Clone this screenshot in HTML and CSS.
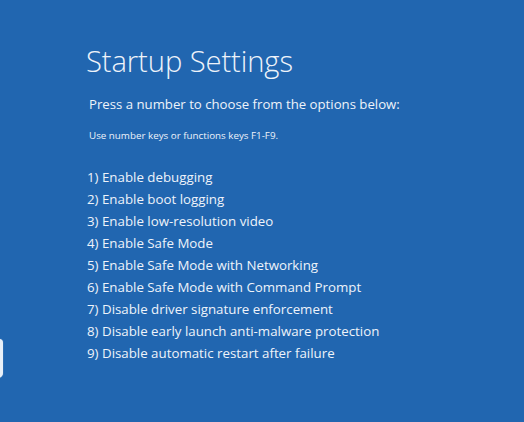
FILE: index.html
```html
<!DOCTYPE html>
<html>
<head>
<meta charset="utf-8">
<link rel="stylesheet" href="styles.css">
</head>
<body>
<div class="screen">
  <div class="content">
    <h1 class="title">Startup Settings</h1>
    <p class="lead">Press a number to choose from the options below:</p>
    <p class="hint">Use number keys or functions keys F1-F9.</p>
    <ol class="options">
      <li>1) Enable debugging</li>
      <li>2) Enable boot logging</li>
      <li>3) Enable low-resolution video</li>
      <li>4) Enable Safe Mode</li>
      <li>5) Enable Safe Mode with Networking</li>
      <li>6) Enable Safe Mode with Command Prompt</li>
      <li>7) Disable driver signature enforcement</li>
      <li>8) Disable early launch anti-malware protection</li>
      <li>9) Disable automatic restart after failure</li>
    </ol>
  </div>
  <div class="edge-mark"></div>
</div>
</body>
</html>
```
FILE: styles.css
```css
html, body {
  margin: 0;
  padding: 0;
  width: 524px;
  height: 422px;
  overflow: hidden;
  background: #2166b0;
}
.screen {
  position: relative;
  width: 524px;
  height: 422px;
  background: #2166b0;
  color: #eef3fa;
  font-family: "Open Sans", "Noto Sans", sans-serif;
}
.content {
  padding: 43px 0 0 86px;
  display: flex;
  flex-direction: column;
}
.title {
  margin: 0;
  font-size: 29.2px;
  font-weight: 300;
  line-height: 36px;
  letter-spacing: -0.1px;
}
.lead {
  margin: 16px 0 0 3px;
  font-size: 13.2px;
  line-height: 18px;
}
.hint {
  margin: 16px 0 0 3px;
  font-size: 9.8px;
  line-height: 14px;
}
.options {
  list-style: none;
  margin: 23px 0 0 1px;
  padding: 0;
  font-size: 13.3px;
  line-height: 22px;
}
.edge-mark {
  position: absolute;
  left: -3px;
  top: 339px;
  width: 6px;
  height: 39px;
  border-radius: 0 4px 5px 0;
  background: #e9f0f8;
  box-shadow: 0 0 1px 0 rgba(255,255,255,0.6);
}
```
